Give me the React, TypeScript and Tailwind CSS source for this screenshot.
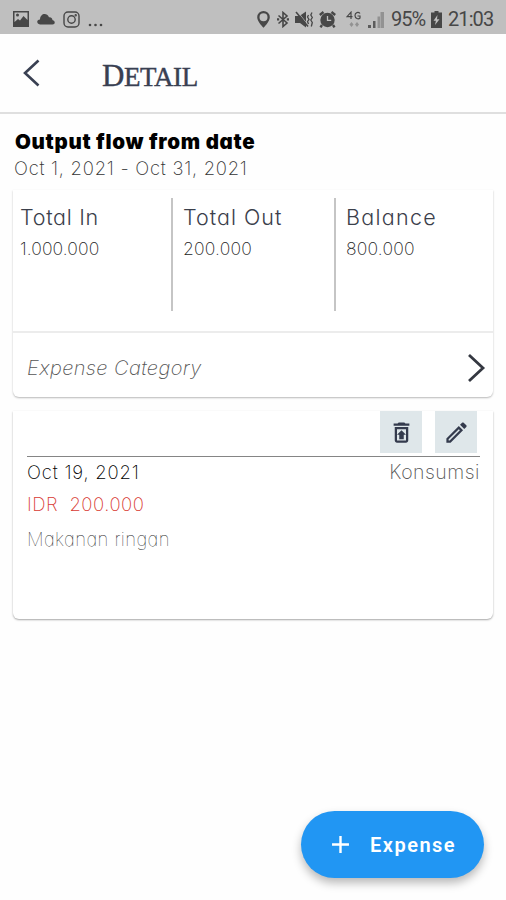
import type { ReactNode } from 'react';
import { MdAdd, MdOutlineEdit, MdOutlineRestoreFromTrash } from 'react-icons/md';

interface Total {
  label: string;
  value: string;
  labelClass: string;
  valueClass: string;
}

const totals: Total[] = [
  { label: 'Total In', value: '1.000.000', labelClass: 'tracking-[0.7px]', valueClass: 'tracking-[0.1px]' },
  { label: 'Total Out', value: '200.000', labelClass: 'tracking-[1px]', valueClass: 'tracking-[0.2px]' },
  { label: 'Balance', value: '800.000', labelClass: 'tracking-[1.3px]', valueClass: 'tracking-[0.2px]' },
];

const StatusBar = () => (
  <div className="flex h-[34px] items-center bg-[#bfbfbf] pt-1 text-[#474747]">
    <svg className="ml-[13px]" width="16" height="16" viewBox="0 0 16 16">
      <path
        fill="currentColor"
        fillRule="evenodd"
        d="M0 0h16v16H0zM1.500 1.500v9.500l3.500-3 2 1.500 3.500-4.500 4 4V1.500zM3 4a1.500 1.500 0 1 0 3 0a1.500 1.500 0 1 0-3 0"
      />
    </svg>
    <svg className="ml-2" width="18" height="12" viewBox="0 0 18 12">
      <path fill="currentColor" d="M3 11.500C-.8 11-.6 6.500 3 6.500C3.200 0 10-.8 12 4.200C14.600 4 15.400 5.500 15.400 7C18.600 7.800 18.400 11.500 15.500 11.500Z" />
    </svg>
    <svg className="ml-2" width="17" height="17" viewBox="0 0 17 17" fill="none" stroke="currentColor" strokeWidth="1.400">
      <rect x="1" y="1" width="15" height="15" rx="4" />
      <circle cx="8.500" cy="8.500" r="3.700" />
      <circle cx="12.700" cy="4.300" r=".5" />
    </svg>
    <svg className="ml-[8px] mt-3" width="16" height="4" viewBox="0 0 16 4" fill="currentColor">
      <circle cx="2" cy="2" r="1.300" />
      <circle cx="7.500" cy="2" r="1.300" />
      <circle cx="13" cy="2" r="1.300" />
    </svg>

    <div className="ml-auto flex items-center">
      <svg width="13" height="17" viewBox="0 0 13 17">
        <path fill="currentColor" fillRule="evenodd" d="M6.500 0a6.300 6.300 0 0 0-6.300 6.300c0 4.400 6.300 10.500 6.300 10.500s6.300-6.100 6.300-10.500A6.300 6.300 0 0 0 6.500 0M6.500 2.200a4 4 0 1 1 0 8a4 4 0 0 1 0-8" />
      </svg>
      <svg className="ml-[7px]" width="12" height="17" viewBox="0 0 12 17">
        <path fill="none" stroke="currentColor" strokeWidth="1.600" d="M1.500 4.500l8.500 7.500-4 3.500v-14l4 3.500-8.500 7.500" />
        <path fill="currentColor" d="M0 7.300h2.200v2.200H0zM9.800 7.300H12v2.200H9.800z" />
      </svg>
      <svg className="ml-[6px]" width="19" height="17" viewBox="0 0 19 17">
        <path fill="currentColor" d="M0 5h4.500L11 .5v16l-6-4.500H0z" />
        <path stroke="#bfbfbf" strokeWidth=".8" d="M2.500.5l11 14" />
        <path stroke="currentColor" strokeWidth="1.600" d="M1 1l12 14.500" />
        <path fill="none" stroke="currentColor" strokeWidth="1.300" d="M13.500 4l-1 2 1.500 2.500-1.500 2 1 2.500M17 1.500l-1.200 2.500 1.500 2.500-1.500 2.500 1.500 2.500-1 4" />
      </svg>
      <svg className="ml-[5px]" width="17" height="17" viewBox="0 0 17 17">
        <circle cx="8.500" cy="9" r="7.200" fill="currentColor" />
        <path stroke="currentColor" strokeWidth="2.400" d="M.8 4L4.500 1M16.200 4L12.500 1M3 14l-1.500 2.300M14 14l1.500 2.300" />
        <path fill="none" stroke="#bfbfbf" strokeWidth="1.300" d="M8.500 5v4.300h3.700" />
      </svg>
      <svg className="ml-[10px]" width="16" height="17" viewBox="0 0 16 17">
        <g fill="none" stroke="currentColor" strokeWidth="1.200">
          <path d="M5 8V1.200L1 5.700h5.500M14 2.500C12.500.6 9 1.300 9 4.500s3.500 4 5 2.500V5h-2.500" />
        </g>
        <path fill="#929292" d="M3.500 13.500l2-2.500 2 2.500-2 2.500zM9 13.500l2-2.500 2 2.500-2 2.500z" />
      </svg>
      <svg className="ml-[6px]" width="17" height="17" viewBox="0 0 17 17">
        <path fill="#5c5c5c" d="M0 14h3v3H0zM5 10h2.500v7H5z" />
        <path fill="#929292" d="M9.500 5.500h2.500V17H9.500zM12.500 1H16v16h-3.500z" />
      </svg>
      <span className="ml-[6px] w-[34px] whitespace-nowrap font-[Roboto,sans-serif] text-[20px] leading-6 tracking-[-1px]">95%</span>
      <svg className="ml-[6px]" width="11" height="17" viewBox="0 0 11 17">
        <path fill="currentColor" fillRule="evenodd" d="M3.500 0h4v1.500H11V17H0V1.500h3.500zM6.500 4L2.500 9.800h2.400L4 14l4.500-5.800H6z" />
      </svg>
      <span className="ml-[6px] mr-[12px] w-[46px] whitespace-nowrap font-[Roboto,sans-serif] text-[20px] leading-6 tracking-[-0.9px]">21:03</span>
    </div>
  </div>
);

const Header = () => (
  <header className="flex h-20 items-center border-b-2 border-[#dfdfdf] text-[#394052]">
    <button aria-label="Back" className="ml-[22px]">
      <svg width="19" height="28" viewBox="0 0 19 28" fill="none" stroke="currentColor" strokeWidth="2.600">
        <path d="M16.500 1.500L3 14l13.500 12.500" />
      </svg>
    </button>
    <h1 className="ml-[61px] mt-[7px] font-['Liberation_Serif',serif] text-[27px] leading-8 tracking-[-0.4px] [-webkit-text-stroke:0.4px_#394052]">
      <span className="text-[31px]">D</span>ETAIL
    </h1>
  </header>
);

const IconButton = ({ label, children }: { label: string; children: ReactNode }) => (
  <button aria-label={label} className="flex size-[42px] items-center justify-center bg-[#dfe7ea] text-[#343b4d]">
    {children}
  </button>
);

export default function App() {
  return (
    // cv11 is Inter's single-storey "a"
    <div className="flex h-[900px] w-[506px] flex-col overflow-hidden bg-[#fefefe] font-[Inter,sans-serif] [font-feature-settings:'cv11']">
      <StatusBar />
      <Header />

      <main className="flex flex-1 flex-col px-[13px] pt-4">
        <h2 className="ml-[2px] whitespace-nowrap text-[20.500px] font-black leading-6 tracking-[0.7px] text-black">
          Output flow from date
        </h2>
        <p className="ml-[1px] whitespace-nowrap text-[18.500px] font-extralight leading-7 tracking-[0.72px] text-[#333]">
          Oct 1, 2021 - Oct 31, 2021
        </p>

        <section className="mt-[8px] h-[207px] rounded-b-md bg-white shadow-[0_1px_2px_rgba(0,0,0,0.28)]">
          <div className="flex h-[143px] border-b-2 border-[#ececec] pt-[8px]">
            {totals.map((total) => (
              <div key={total.label} className="h-[113px] w-[160px] shrink-0 border-r-2 border-[#c5c5c5] pl-[7px] not-first:w-[163px] not-first:pl-[10px] last:w-auto last:border-r-0">
                <p className={`pt-1 text-[21.500px] font-light leading-[30px] text-[#3b404b] ${total.labelClass}`}>{total.label}</p>
                <p className={`mt-[3px] text-[17.500px] font-extralight leading-7 text-[#222] ${total.valueClass}`}>{total.value}</p>
              </div>
            ))}
          </div>
          <div className="flex h-[64px] items-center justify-between pl-[14px] pr-[7px] pt-[6px]">
            <span className="text-[20px] font-extralight italic leading-7 tracking-[0.4px] text-[#555]">Expense Category</span>
            <svg width="20" height="30" viewBox="0 0 20 30" fill="none" stroke="#343841" strokeWidth="2.800">
              <path d="M3 2l14 13L3 28" />
            </svg>
          </div>
        </section>

        <section className="mt-[14px] h-[208px] rounded-b-md bg-white pl-[14px] pr-[13px] shadow-[0_1px_2px_rgba(0,0,0,0.35)]">
          <div className="flex h-[46px] justify-end gap-[13px] border-b border-[#858585] pr-[3px]">
            <IconButton label="Delete">
              <MdOutlineRestoreFromTrash size={27} />
            </IconButton>
            <IconButton label="Edit">
              <MdOutlineEdit size={27} />
            </IconButton>
          </div>
          <div className="flex h-[30px] items-center justify-between leading-7">
            <span className="text-[18.500px] font-extralight tracking-[0.8px] text-black">Oct 19, 2021</span>
            <span className="text-[19.500px] font-extralight tracking-[0.5px] text-[#555]">Konsumsi</span>
          </div>
          <p className="mt-[2px] whitespace-pre text-[18.500px] font-extralight leading-[30px] tracking-[0.5px] text-[#d83a32]">IDR  200.000</p>
          <p className="mt-[5px] text-[18.500px] font-thin leading-[30px] tracking-[0.4px] text-[#222]">Makanan ringan</p>
        </section>

        <button className="mb-[22px] mr-[9px] mt-auto flex h-[67px] w-[183px] items-center self-end rounded-full bg-[#2196f3] pl-[25px] text-white shadow-[0_5px_10px_rgba(0,0,0,0.28)]">
          <MdAdd size={29} />
          <span className="ml-[15px] font-[Roboto,sans-serif] text-[20px] font-semibold leading-6 tracking-[1.500px]">Expense</span>
        </button>
      </main>
    </div>
  );
}
